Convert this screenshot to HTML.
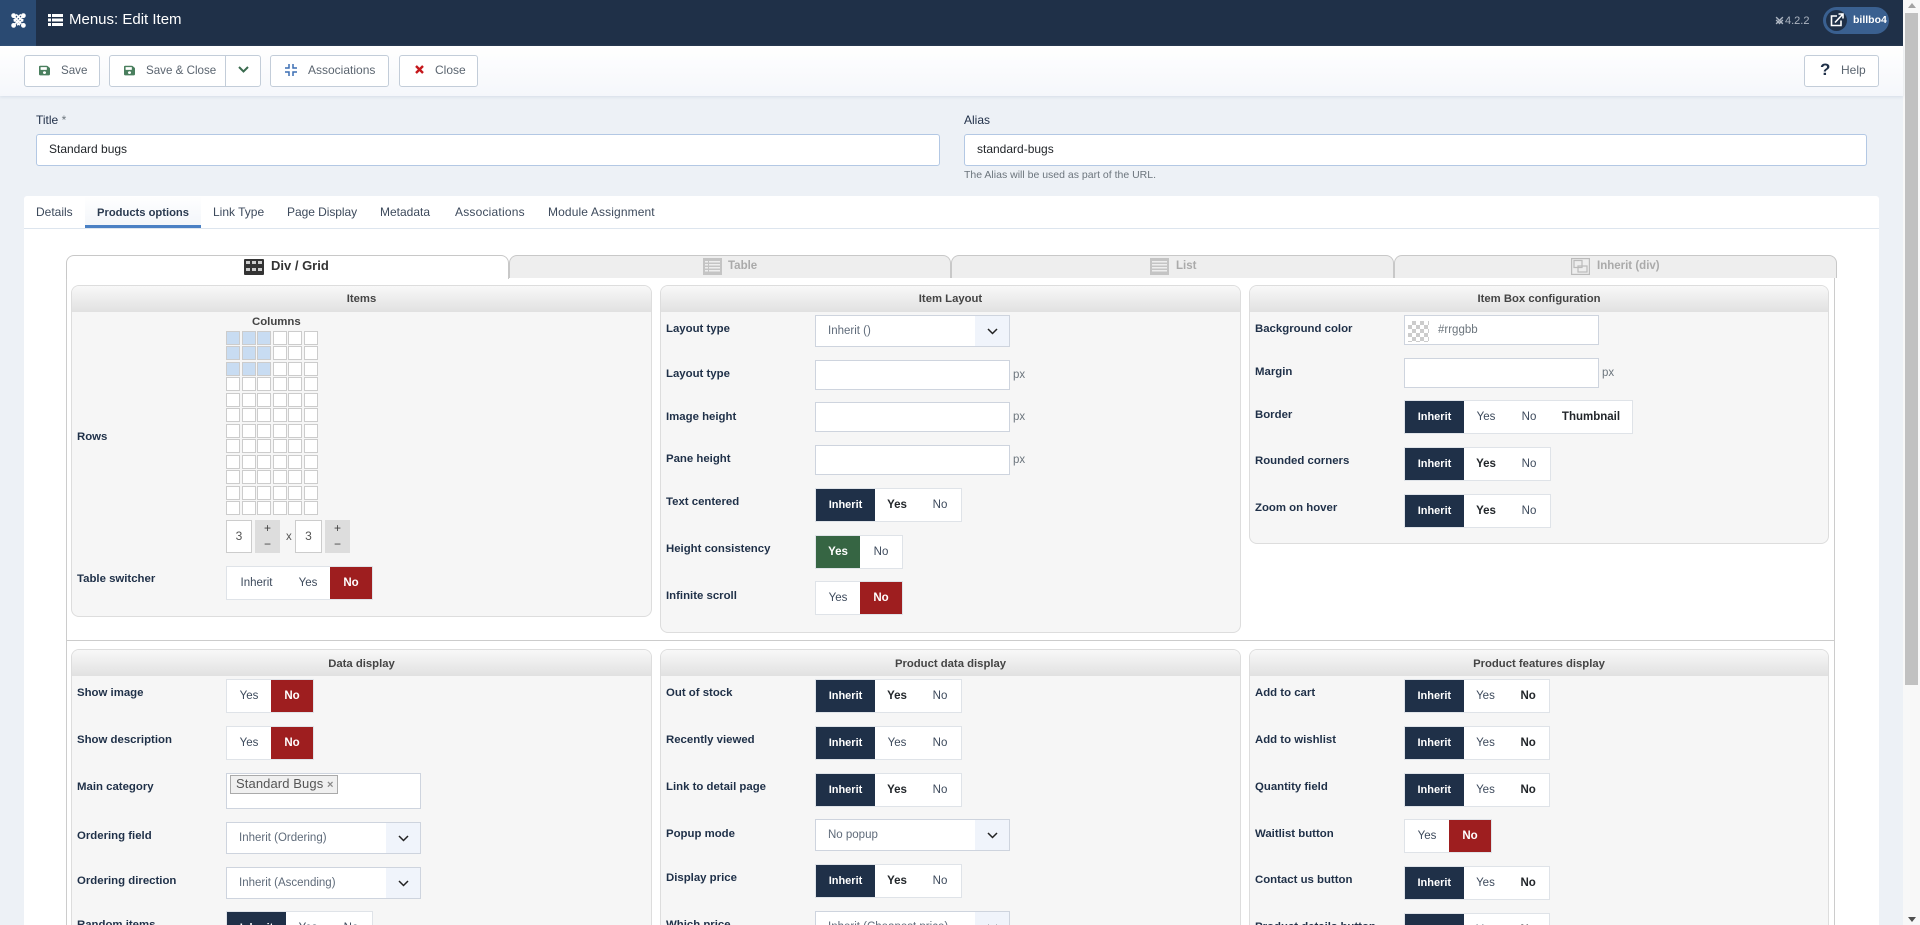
<!DOCTYPE html>
<html lang="en"><head><meta charset="utf-8"><title>Menus: Edit Item</title>
<style>
*{box-sizing:border-box}
html,body{margin:0;padding:0;width:1920px;height:925px;overflow:hidden}
body{background:#edf1f6;font-family:"Liberation Sans",sans-serif;font-size:12px;color:#22262a}
#root{position:relative;width:1920px;height:925px;overflow:hidden;contain:paint}
#root>*,.abs{position:absolute}
.btn{top:55px;height:32px;background:#fff;border:1px solid #c3cdd9;border-radius:3px}
.bt{top:62px;line-height:18px;font-size:11.6px;color:#5b6570}
.lbl{line-height:16px;font-size:11.5px;color:#22314a}
.inp{height:32px;background:#fff;border:1px solid #b3c8e4;border-radius:3px;line-height:29px;padding-left:12px;font-size:12px;color:#22262a}
.tab{top:204px;line-height:16px;font-size:12px;color:#3d4a5c}
.it{top:255px;height:23px;background:#eee;border:1px solid #c8c8c8;border-bottom:0;border-radius:8px 8px 0 0}
.itt{top:258px;line-height:16px;font-size:11.5px;font-weight:bold;color:#aaa}
.p{background:#f6f6f6;border:1px solid #ddd;border-radius:8px;overflow:hidden}
.p h3{margin:0;height:26px;line-height:26px;text-align:center;font-size:11.3px;font-weight:bold;color:#444;background:linear-gradient(#f8f8f8,#e1e1e1)}
.p2{height:276px;border-bottom:0;border-radius:8px 8px 0 0}
.p2 h3{line-height:28px}
.l{line-height:17px;font-size:11.4px;font-weight:bold;color:#1f3048;white-space:nowrap}
.g{height:34px;background:#fff;border:1px solid #dfe3e8;display:flex;font-size:11.5px;line-height:33px;text-align:center;color:#3d4a5c;overflow:hidden}
.g span{display:block;height:32px}
.g .w1{width:59px}.g .w2{width:44px}.g .w3{width:42px}.g .w4{width:82px}
.g .d{background:#1f3048;color:#fff;font-weight:bold;font-size:11px}
.g .r{background:#9e1e1f;color:#fff;font-weight:bold}
.g .gr{background:#366543;color:#fff;font-weight:bold}
.g .b{font-weight:bold;color:#22262a}
.s{height:32px;background:#fff;border:1px solid #ced4de;line-height:31px;padding-left:12px;font-size:11.5px;color:#5f6b7a;width:195px;overflow:hidden}
.s i{position:absolute;right:0;top:0;width:34px;height:30px;background:#f0f4fb}
.s svg{position:absolute;right:11px;top:12px}
.i{width:195px;height:30px;background:#fff;border:1px solid #ced4de}
.px{line-height:16px;font-size:11.5px;color:#6c757d}
.cut{overflow:hidden;border-bottom:0}
</style></head><body><div id="root">

<!-- header -->
<div style="left:0;top:0;width:1903px;height:46px;background:#1f3048"></div>
<div style="left:0;top:0;width:36px;height:46px;background:#2a4a72"></div>
<svg style="left:11px;top:13px" width="15" height="15" viewBox="0 0 16 16" fill="none" stroke="#fff" stroke-width="1.7"><path d="M3 3.5L11 11.5M5.5 1.5L13 9M12.500 3.500L4.500 11.500M10.500 1.500L3 9M3 6.500L9.500 13M13 6.500L6.500 13"/><circle cx="2.800" cy="2.800" r="1.700" fill="#fff"/><circle cx="13.200" cy="2.800" r="1.700" fill="#fff"/><circle cx="2.800" cy="13.200" r="1.700" fill="#fff"/><circle cx="13.200" cy="13.200" r="1.700" fill="#fff"/></svg>
<svg style="left:48px;top:14px" width="15" height="12" viewBox="0 0 15 12" fill="#fff"><rect x="0" y="0" width="3" height="3"/><rect x="4" y="0" width="11" height="3"/><rect x="0" y="4.500" width="3" height="3"/><rect x="4" y="4.500" width="11" height="3"/><rect x="0" y="9" width="3" height="3"/><rect x="4" y="9" width="11" height="3"/></svg>
<div style="left:69px;top:11px;line-height:18px;font-size:15px;color:#fff;white-space:nowrap">Menus: Edit Item</div>
<svg style="left:1775px;top:16px" width="9" height="9" viewBox="0 0 16 16" fill="none" stroke="#aeb6c2" stroke-width="2.500"><path d="M2 2L14 14M14 2L2 14M2 7L9 14M14 7L7 14"/></svg>
<div style="left:1785px;top:13px;line-height:16px;font-size:11px;color:#aeb6c2">4.2.2</div>
<div style="left:1823px;top:7px;width:66px;height:27px;border-radius:14px;background:#3a6090"></div>
<div style="left:1826px;top:10px;width:21px;height:21px;border-radius:50%;background:#1f3048"></div>
<svg style="left:1830px;top:13px" width="14" height="14" viewBox="0 0 14 14" fill="none" stroke="#fff" stroke-width="1.600"><path d="M7 3H1.500V12.500H11V7.500"/><path d="M5 9.500L12.500 1.500M8.500 1H13V5.500"/></svg>
<div style="left:1853px;top:13px;line-height:15px;font-size:10.5px;font-weight:bold;color:#fff">billbo4</div>

<!-- scrollbar -->
<div style="left:1903px;top:0;width:17px;height:925px;background:#f8f8f8"></div>
<div style="left:1905px;top:13px;width:13px;height:672px;background:#c1c1c1"></div>
<div style="left:1908px;top:3px;width:0;height:0;border:4px solid transparent;border-top:0;border-bottom:5px solid #a3a3a3"></div>
<div style="left:1908px;top:917px;width:0;height:0;border:4px solid transparent;border-bottom:0;border-top:5px solid #505050"></div>

<!-- toolbar -->
<div style="left:0;top:46px;width:1903px;height:50px;background:linear-gradient(#fff,#f5f7fb);box-shadow:0 1px 3px rgba(170,185,205,.35)"></div>
<div class="btn" style="left:24px;width:76px"></div>
<svg style="left:39px;top:65px" width="11" height="11" viewBox="0 0 448 512" fill="#4a7f5e" preserveAspectRatio="none"><path d="M433.941 129.941l-83.882-83.882A48 48 0 0 0 316.118 32H48C21.49 32 0 53.49 0 80v352c0 26.51 21.49 48 48 48h352c26.51 0 48-21.49 48-48V163.882a48 48 0 0 0-14.059-33.941zM224 416c-35.346 0-64-28.654-64-64 0-35.346 28.654-64 64-64s64 28.654 64 64c0 35.346-28.654 64-64 64zm96-304.52V212c0 6.627-5.373 12-12 12H76c-6.627 0-12-5.373-12-12V108c0-6.627 5.373-12 12-12h228.52c3.183 0 6.235 1.264 8.485 3.515l3.48 3.48A11.996 11.996 0 0 1 320 111.48z"/></svg>
<div class="bt" style="left:61px">Save</div>
<div class="btn" style="left:109px;width:152px"></div>
<div style="left:225px;top:55px;width:1px;height:32px;background:#c3cdd9"></div>
<svg style="left:124px;top:65px" width="11" height="11" viewBox="0 0 448 512" fill="#4a7f5e" preserveAspectRatio="none"><path d="M433.941 129.941l-83.882-83.882A48 48 0 0 0 316.118 32H48C21.49 32 0 53.49 0 80v352c0 26.51 21.49 48 48 48h352c26.51 0 48-21.49 48-48V163.882a48 48 0 0 0-14.059-33.941zM224 416c-35.346 0-64-28.654-64-64 0-35.346 28.654-64 64-64s64 28.654 64 64c0 35.346-28.654 64-64 64zm96-304.52V212c0 6.627-5.373 12-12 12H76c-6.627 0-12-5.373-12-12V108c0-6.627 5.373-12 12-12h228.52c3.183 0 6.235 1.264 8.485 3.515l3.48 3.48A11.996 11.996 0 0 1 320 111.48z"/></svg>
<div class="bt" style="left:146px;white-space:nowrap">Save &amp; Close</div>
<svg style="left:238px;top:66px" width="11" height="7" viewBox="0 0 11 7" fill="none" stroke="#3a6b4f" stroke-width="2"><path d="M1 1L5.500 5.500L10 1"/></svg>
<div class="btn" style="left:270px;width:119px"></div>
<svg style="left:285px;top:64px" width="12" height="12" viewBox="0 0 12 12" fill="none" stroke="#3c6eb4" stroke-width="1.500"><path d="M4 0V4H0M8 0V4H12M4 12V8H0M8 12V8H12"/></svg>
<div class="bt" style="left:308px;top:61px;font-size:12px">Associations</div>
<div class="btn" style="left:399px;width:79px"></div>
<svg style="left:415px;top:65px" width="9" height="9" viewBox="0 0 9 9" fill="none" stroke="#c5181c" stroke-width="2.400"><path d="M1 1L8 8M8 1L1 8"/></svg>
<div class="bt" style="left:435px;top:61px;font-size:12px">Close</div>
<div class="btn" style="left:1804px;width:75px"></div>
<div style="left:1820px;top:61px;line-height:18px;font-size:17px;font-weight:bold;color:#1f3048">?</div>
<div class="bt" style="left:1841px;top:61px;font-size:12px">Help</div>

<!-- title / alias -->
<div class="lbl" style="left:36px;top:112px;font-size:12px">Title <span style="color:#6c757d">*</span></div>
<div class="inp" style="left:36px;top:134px;width:904px">Standard bugs</div>
<div class="lbl" style="left:964px;top:112px;font-size:12px">Alias</div>
<div class="inp" style="left:964px;top:134px;width:903px">standard-bugs</div>
<div style="left:964px;top:167px;line-height:16px;font-size:10.500px;color:#6c757d;white-space:nowrap">The Alias will be used as part of the URL.</div>

<!-- tabs container -->
<div style="left:24px;top:196px;width:1855px;height:729px;background:#fff;border-radius:3px 3px 0 0"></div>
<div style="left:24px;top:228px;width:1855px;height:1px;background:#dde5ee"></div>
<div style="left:85px;top:196px;width:116px;height:32px;background:linear-gradient(#fff,#f3f6fa);border-bottom:3px solid #4a80c4"></div>
<div class="tab" style="left:36px">Details</div>
<div class="tab" style="left:97px;top:205px;font-weight:bold;font-size:11.2px;color:#2a3a50;white-space:nowrap">Products options</div>
<div class="tab" style="left:213px;white-space:nowrap">Link Type</div>
<div class="tab" style="left:287px;white-space:nowrap;letter-spacing:-.05px">Page Display</div>
<div class="tab" style="left:380px">Metadata</div>
<div class="tab" style="left:455px;letter-spacing:.2px">Associations</div>
<div class="tab" style="left:548px;white-space:nowrap;letter-spacing:.12px">Module Assignment</div>

<!-- inner tabs -->
<div class="abs" style="left:66px;top:277px;width:1769px;height:648px;border:1px solid #ccc;border-top:0;border-bottom:0"></div>
<div class="it" style="left:66px;width:443px;background:#fff;height:24px"></div>
<div class="it" style="left:509px;width:442px"></div>
<div class="it" style="left:951px;width:443px"></div>
<div class="it" style="left:1394px;width:443px"></div>
<svg style="left:244px;top:259px" width="20" height="16" viewBox="0 0 20 16"><rect width="20" height="16" rx="1" fill="#333"/><g fill="#ccc"><rect x="2" y="2" width="4" height="3"/><rect x="8" y="2" width="4" height="3"/><rect x="14" y="2" width="4" height="3"/><rect x="2" y="9" width="4" height="3"/><rect x="8" y="9" width="4" height="3"/><rect x="14" y="9" width="4" height="3"/></g></svg>
<div style="left:271px;top:257px;line-height:18px;font-size:13px;font-weight:bold;color:#333;white-space:nowrap">Div / Grid</div>
<svg style="left:703px;top:258px" width="19" height="17" viewBox="0 0 19 17"><rect width="19" height="17" fill="#c4c4c4"/><g fill="#eee"><rect x="2" y="3" width="3" height="1.500"/><rect x="6" y="3" width="11" height="1.500"/><rect x="2" y="6" width="3" height="1.500"/><rect x="6" y="6" width="11" height="1.500"/><rect x="2" y="9" width="3" height="1.500"/><rect x="6" y="9" width="11" height="1.500"/><rect x="2" y="12" width="3" height="1.500"/><rect x="6" y="12" width="11" height="1.500"/></g></svg>
<div class="itt" style="left:728px">Table</div>
<svg style="left:1150px;top:258px" width="19" height="17" viewBox="0 0 19 17"><rect width="19" height="17" fill="#c4c4c4"/><g fill="#eee"><rect x="2" y="3" width="15" height="1.500"/><rect x="2" y="6" width="15" height="1.500"/><rect x="2" y="9" width="15" height="1.500"/><rect x="2" y="12" width="15" height="1.500"/></g></svg>
<div class="itt" style="left:1176px">List</div>
<svg style="left:1571px;top:258px" width="19" height="17" viewBox="0 0 19 17" fill="none" stroke="#bbb" stroke-width="1.200"><rect x=".6" y=".6" width="17.800" height="15.800"/><rect x="3" y="2.500" width="8" height="7"/><rect x="7" y="8" width="9" height="6"/></svg>
<div class="itt" style="left:1597px;white-space:nowrap">Inherit (div)</div>
<div style="left:67px;top:640px;width:1767px;height:1px;background:#ccc"></div>

<!-- panels -->
<div class="p" style="left:71px;top:285px;width:581px;height:332px"><h3>Items</h3></div>
<div class="p" style="left:660px;top:285px;width:581px;height:348px"><h3>Item Layout</h3></div>
<div class="p" style="left:1249px;top:285px;width:580px;height:259px"><h3>Item Box configuration</h3></div>
<div class="p p2" style="left:71px;top:649px;width:581px"><h3>Data display</h3></div>
<div class="p p2" style="left:660px;top:649px;width:581px"><h3>Product data display</h3></div>
<div class="p p2" style="left:1249px;top:649px;width:580px"><h3>Product features display</h3></div>

<!-- Items -->
<div class="l" style="left:252px;top:314px;color:#444">Columns</div>
<svg style="left:226px;top:331px" width="92" height="184" viewBox="0 0 92 184">
<g stroke="#ccc" stroke-width="1" fill="#c8dcf2"><rect x=".5" y=".5" width="13" height="13"/><rect x="16.500" y=".5" width="13" height="13"/><rect x="31.500" y=".5" width="13" height="13"/><rect x=".5" y="15.500" width="13" height="13"/><rect x="16.500" y="15.500" width="13" height="13"/><rect x="31.500" y="15.500" width="13" height="13"/><rect x=".5" y="31.500" width="13" height="13"/><rect x="16.500" y="31.500" width="13" height="13"/><rect x="31.500" y="31.500" width="13" height="13"/></g>
<g stroke="#ccc" stroke-width="1" fill="#fff">
<rect x="47.500" y=".5" width="13" height="13"/><rect x="62.500" y=".5" width="13" height="13"/><rect x="78.500" y=".5" width="13" height="13"/>
<rect x="47.500" y="15.500" width="13" height="13"/><rect x="62.500" y="15.500" width="13" height="13"/><rect x="78.500" y="15.500" width="13" height="13"/>
<rect x="47.500" y="31.500" width="13" height="13"/><rect x="62.500" y="31.500" width="13" height="13"/><rect x="78.500" y="31.500" width="13" height="13"/>
<rect x=".5" y="46.500" width="13" height="13"/><rect x="16.500" y="46.500" width="13" height="13"/><rect x="31.500" y="46.500" width="13" height="13"/><rect x="47.500" y="46.500" width="13" height="13"/><rect x="62.500" y="46.500" width="13" height="13"/><rect x="78.500" y="46.500" width="13" height="13"/>
<rect x=".5" y="62.500" width="13" height="13"/><rect x="16.500" y="62.500" width="13" height="13"/><rect x="31.500" y="62.500" width="13" height="13"/><rect x="47.500" y="62.500" width="13" height="13"/><rect x="62.500" y="62.500" width="13" height="13"/><rect x="78.500" y="62.500" width="13" height="13"/>
<rect x=".5" y="77.500" width="13" height="13"/><rect x="16.500" y="77.500" width="13" height="13"/><rect x="31.500" y="77.500" width="13" height="13"/><rect x="47.500" y="77.500" width="13" height="13"/><rect x="62.500" y="77.500" width="13" height="13"/><rect x="78.500" y="77.500" width="13" height="13"/>
<rect x=".5" y="93.500" width="13" height="13"/><rect x="16.500" y="93.500" width="13" height="13"/><rect x="31.500" y="93.500" width="13" height="13"/><rect x="47.500" y="93.500" width="13" height="13"/><rect x="62.500" y="93.500" width="13" height="13"/><rect x="78.500" y="93.500" width="13" height="13"/>
<rect x=".5" y="108.500" width="13" height="13"/><rect x="16.500" y="108.500" width="13" height="13"/><rect x="31.500" y="108.500" width="13" height="13"/><rect x="47.500" y="108.500" width="13" height="13"/><rect x="62.500" y="108.500" width="13" height="13"/><rect x="78.500" y="108.500" width="13" height="13"/>
<rect x=".5" y="124.500" width="13" height="13"/><rect x="16.500" y="124.500" width="13" height="13"/><rect x="31.500" y="124.500" width="13" height="13"/><rect x="47.500" y="124.500" width="13" height="13"/><rect x="62.500" y="124.500" width="13" height="13"/><rect x="78.500" y="124.500" width="13" height="13"/>
<rect x=".5" y="139.500" width="13" height="13"/><rect x="16.500" y="139.500" width="13" height="13"/><rect x="31.500" y="139.500" width="13" height="13"/><rect x="47.500" y="139.500" width="13" height="13"/><rect x="62.500" y="139.500" width="13" height="13"/><rect x="78.500" y="139.500" width="13" height="13"/>
<rect x=".5" y="155.500" width="13" height="13"/><rect x="16.500" y="155.500" width="13" height="13"/><rect x="31.500" y="155.500" width="13" height="13"/><rect x="47.500" y="155.500" width="13" height="13"/><rect x="62.500" y="155.500" width="13" height="13"/><rect x="78.500" y="155.500" width="13" height="13"/>
<rect x=".5" y="170.500" width="13" height="13"/><rect x="16.500" y="170.500" width="13" height="13"/><rect x="31.500" y="170.500" width="13" height="13"/><rect x="47.500" y="170.500" width="13" height="13"/><rect x="62.500" y="170.500" width="13" height="13"/><rect x="78.500" y="170.500" width="13" height="13"/>
</g></svg>
<div style="left:226px;top:520px;width:26px;height:33px;background:#fff;border:1px solid #ccc;text-align:center;line-height:31px;font-size:12px;color:#555">3</div>
<div style="left:255px;top:520px;width:25px;height:33px;background:#ddd;text-align:center;font-size:12px;line-height:16px;color:#444">+<br>&minus;</div>
<div style="left:286px;top:529px;line-height:16px;font-size:11.5px;color:#555">x</div>
<div style="left:295px;top:520px;width:27px;height:33px;background:#fff;border:1px solid #ccc;text-align:center;line-height:31px;font-size:12px;color:#555">3</div>
<div style="left:325px;top:520px;width:25px;height:33px;background:#ddd;text-align:center;font-size:12px;line-height:16px;color:#444">+<br>&minus;</div>
<div class="l" style="left:77px;top:429px">Rows</div>
<div class="l" style="left:77px;top:571px">Table switcher</div>
<div class="g" style="left:226px;top:566px;width:147px"><span class="w1">Inherit</span><span class="w2">Yes</span><span class="w3 r">No</span></div>

<!-- Item Layout -->
<div class="l" style="left:666px;top:321px">Layout type</div>
<div class="s" style="left:815px;top:315px">Inherit ()<i></i><svg width="11" height="7" viewBox="0 0 11 7" fill="none" stroke="#222" stroke-width="1.500"><path d="M1 1L5.500 5.500L10 1"/></svg></div>
<div class="l" style="left:666px;top:366px">Layout type</div>
<div class="i" style="left:815px;top:360px"></div><div class="px" style="left:1013px;top:367px">px</div>
<div class="l" style="left:666px;top:409px">Image height</div>
<div class="i" style="left:815px;top:402px"></div><div class="px" style="left:1013px;top:409px">px</div>
<div class="l" style="left:666px;top:451px">Pane height</div>
<div class="i" style="left:815px;top:445px"></div><div class="px" style="left:1013px;top:452px">px</div>
<div class="l" style="left:666px;top:494px">Text centered</div>
<div class="g" style="left:815px;top:488px;width:147px"><span class="w1 d">Inherit</span><span class="w2 b">Yes</span><span class="w3">No</span></div>
<div class="l" style="left:666px;top:541px">Height consistency</div>
<div class="g" style="left:815px;top:535px;width:88px"><span class="w2 gr">Yes</span><span class="w3">No</span></div>
<div class="l" style="left:666px;top:588px">Infinite scroll</div>
<div class="g" style="left:815px;top:581px;width:88px"><span class="w2">Yes</span><span class="w3 r">No</span></div>

<!-- Item Box -->
<div class="l" style="left:1255px;top:321px">Background color</div>
<div class="i" style="left:1404px;top:315px"></div>
<div style="left:1408px;top:321px;width:21px;height:21px;background:repeating-conic-gradient(#ccc 0 25%,#fff 0 50%) 0 0/8px 8px"></div>
<div style="left:1438px;top:322px;line-height:16px;font-size:11.5px;color:#6c757d">#rrggbb</div>
<div class="l" style="left:1255px;top:364px">Margin</div>
<div class="i" style="left:1404px;top:358px"></div><div class="px" style="left:1602px;top:365px">px</div>
<div class="l" style="left:1255px;top:407px">Border</div>
<div class="g" style="left:1404px;top:400px;width:229px"><span class="w1 d">Inherit</span><span class="w2">Yes</span><span class="w3">No</span><span class="w4 b">Thumbnail</span></div>
<div class="l" style="left:1255px;top:453px">Rounded corners</div>
<div class="g" style="left:1404px;top:447px;width:147px"><span class="w1 d">Inherit</span><span class="w2 b">Yes</span><span class="w3">No</span></div>
<div class="l" style="left:1255px;top:500px">Zoom on hover</div>
<div class="g" style="left:1404px;top:494px;width:147px"><span class="w1 d">Inherit</span><span class="w2 b">Yes</span><span class="w3">No</span></div>

<!-- Data display -->
<div class="l" style="left:77px;top:685px">Show image</div>
<div class="g" style="left:226px;top:679px;width:88px"><span class="w2">Yes</span><span class="w3 r">No</span></div>
<div class="l" style="left:77px;top:732px">Show description</div>
<div class="g" style="left:226px;top:726px;width:88px"><span class="w2">Yes</span><span class="w3 r">No</span></div>
<div class="l" style="left:77px;top:779px">Main category</div>
<div style="left:226px;top:773px;width:195px;height:36px;background:#fff;border:1px solid #ced4de"></div>
<div style="left:230px;top:775px;width:108px;height:19px;background:#f0f0f0;border:1px solid #aaa;line-height:16px;padding-left:5px;font-size:13px;color:#555;white-space:nowrap;letter-spacing:.1px">Standard Bugs <span style="font-size:11px;color:#888;font-weight:bold">&times;</span></div>
<div class="l" style="left:77px;top:828px">Ordering field</div>
<div class="s" style="left:226px;top:822px">Inherit (Ordering)<i></i><svg width="11" height="7" viewBox="0 0 11 7" fill="none" stroke="#222" stroke-width="1.500"><path d="M1 1L5.500 5.500L10 1"/></svg></div>
<div class="l" style="left:77px;top:873px">Ordering direction</div>
<div class="s" style="left:226px;top:867px">Inherit (Ascending)<i></i><svg width="11" height="7" viewBox="0 0 11 7" fill="none" stroke="#222" stroke-width="1.500"><path d="M1 1L5.500 5.500L10 1"/></svg></div>
<div class="l cut" style="left:77px;top:917px;height:8px">Random items</div>
<div class="g cut" style="left:226px;top:911px;width:147px;height:14px"><span class="w1 d">Inherit</span><span class="w2">Yes</span><span class="w3">No</span></div>

<!-- Product data display -->
<div class="l" style="left:666px;top:685px">Out of stock</div>
<div class="g" style="left:815px;top:679px;width:147px"><span class="w1 d">Inherit</span><span class="w2 b">Yes</span><span class="w3">No</span></div>
<div class="l" style="left:666px;top:732px">Recently viewed</div>
<div class="g" style="left:815px;top:726px;width:147px"><span class="w1 d">Inherit</span><span class="w2">Yes</span><span class="w3">No</span></div>
<div class="l" style="left:666px;top:779px">Link to detail page</div>
<div class="g" style="left:815px;top:773px;width:147px"><span class="w1 d">Inherit</span><span class="w2 b">Yes</span><span class="w3">No</span></div>
<div class="l" style="left:666px;top:826px">Popup mode</div>
<div class="s" style="left:815px;top:819px">No popup<i></i><svg width="11" height="7" viewBox="0 0 11 7" fill="none" stroke="#222" stroke-width="1.500"><path d="M1 1L5.500 5.500L10 1"/></svg></div>
<div class="l" style="left:666px;top:870px">Display price</div>
<div class="g" style="left:815px;top:864px;width:147px"><span class="w1 d">Inherit</span><span class="w2 b">Yes</span><span class="w3">No</span></div>
<div class="l cut" style="left:666px;top:917px;height:8px">Which price</div>
<div class="s cut" style="left:815px;top:911px;height:14px">Inherit (Cheapest price)<i></i><svg width="11" height="7" viewBox="0 0 11 7" fill="none" stroke="#222" stroke-width="1.500"><path d="M1 1L5.500 5.500L10 1"/></svg></div>

<!-- Product features -->
<div class="l" style="left:1255px;top:685px">Add to cart</div>
<div class="g" style="left:1404px;top:679px;width:146px"><span class="w1 d">Inherit</span><span class="w2">Yes</span><span class="w3 b">No</span></div>
<div class="l" style="left:1255px;top:732px">Add to wishlist</div>
<div class="g" style="left:1404px;top:726px;width:146px"><span class="w1 d">Inherit</span><span class="w2">Yes</span><span class="w3 b">No</span></div>
<div class="l" style="left:1255px;top:779px">Quantity field</div>
<div class="g" style="left:1404px;top:773px;width:146px"><span class="w1 d">Inherit</span><span class="w2">Yes</span><span class="w3 b">No</span></div>
<div class="l" style="left:1255px;top:826px">Waitlist button</div>
<div class="g" style="left:1404px;top:819px;width:88px"><span class="w2">Yes</span><span class="w3 r">No</span></div>
<div class="l" style="left:1255px;top:872px">Contact us button</div>
<div class="g" style="left:1404px;top:866px;width:146px"><span class="w1 d">Inherit</span><span class="w2">Yes</span><span class="w3 b">No</span></div>
<div class="l cut" style="left:1255px;top:919px;height:6px">Product details button</div>
<div class="g cut" style="left:1404px;top:913px;width:146px;height:12px"><span class="w1 d">Inherit</span><span class="w2">Yes</span><span class="w3 b">No</span></div>

</div></body></html>
